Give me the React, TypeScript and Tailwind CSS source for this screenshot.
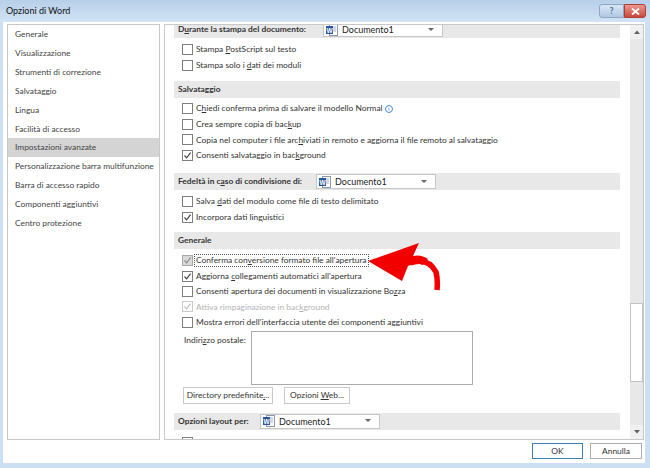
import type { ReactNode } from "react"

const LEFT_ITEMS = [
  "Generale",
  "Visualizzazione",
  "Strumenti di correzione",
  "Salvataggio",
  "Lingua",
  "Facilità di accesso",
  "Impostazioni avanzate",
  "Personalizzazione barra multifunzione",
  "Barra di accesso rapido",
  "Componenti aggiuntivi",
  "Centro protezione",
]

function WordIcon() {
  return (
    <svg width="12" height="12" viewBox="0 0 12 12" className="flex-shrink-0">
      <rect x="3.5" y="0.5" width="8" height="11" fill="#fff" stroke="#8a9bb0" />
      <line x1="7" y1="3" x2="10" y2="3" stroke="#9fb3cc" />
      <line x1="7" y1="5" x2="10" y2="5" stroke="#9fb3cc" />
      <line x1="7" y1="7" x2="10" y2="7" stroke="#9fb3cc" />
      <rect x="0" y="2" width="7" height="8" fill="#2b579a" />
      <text x="3.5" y="8.5" fontSize="6.5" fontWeight="700" fill="#fff" textAnchor="middle" fontFamily="Liberation Sans, sans-serif">
        W
      </text>
    </svg>
  )
}

function Dropdown() {
  return (
    <div className="flex items-center h-[15px] w-[120px] bg-white border border-[#c6c6c6] pl-[2px] pr-[8px] gap-[4px]">
      <WordIcon />
      <span className="flex-1 text-[#222] font-normal leading-none text-[9px]">Documento1</span>
      <svg width="6" height="4" viewBox="0 0 6 4">
        <path d="M0 0 L6 0 L3 3 Z" fill="#666" />
      </svg>
    </div>
  )
}

function Band({ children, labelWidth, dropdown }: { children: ReactNode; labelWidth?: string; dropdown?: boolean }) {
  return (
    <div className="flex items-center h-[17px] bg-[#e8e8e8] pl-[4px] font-bold text-[#333]">
      <span className={`whitespace-nowrap ${labelWidth ?? ""}`}>{children}</span>
      {dropdown && <Dropdown />}
    </div>
  )
}

function Check({ checked, disabled, gray }: { checked?: boolean; disabled?: boolean; gray?: boolean }) {
  const border = disabled ? "border-[#c9c9c9]" : gray ? "border-[#a8a8a8]" : "border-[#7f7f7f]"
  const bg = gray ? "bg-[#d9d9d9]" : "bg-white"
  const stroke = disabled ? "#c0c0c0" : gray ? "#8c8c8c" : "#444"
  return (
    <span className={`flex items-center justify-center w-[11px] h-[11px] border ${border} ${bg} flex-shrink-0`}>
      {checked && (
        <svg width="9" height="9" viewBox="0 0 9 9">
          <path d="M1.5 4.5 L3.6 6.8 L7.6 1.6" fill="none" stroke={stroke} strokeWidth="1.2" />
        </svg>
      )}
    </span>
  )
}

function Row({
  children,
  checked,
  disabled,
  gray,
  focus,
  h = "h-[16px]",
}: {
  children?: ReactNode
  checked?: boolean
  disabled?: boolean
  gray?: boolean
  focus?: boolean
  h?: string
}) {
  return (
    <div className={`flex items-center ${h} pl-[8px] gap-[3px]`}>
      <Check checked={checked} disabled={disabled} gray={gray} />
      {children && (
        <span
          className={`whitespace-nowrap leading-none ${disabled ? "text-[#b4b4b4]" : "text-[#333]"} ${
            focus ? "outline outline-1 outline-dotted outline-[#555] px-[1px] py-[1px] -ml-[1px]" : ""
          }`}
        >
          {children}
        </span>
      )}
    </div>
  )
}

function Btn({ children, w }: { children: ReactNode; w: string }) {
  return (
    <div className={`flex items-center justify-center h-[17px] ${w} bg-white border border-[#c9c9c9] text-[#333]`}>
      <span className="whitespace-nowrap">{children}</span>
    </div>
  )
}

function Arrow() {
  return (
    <svg className="absolute left-0 top-0 pointer-events-none" width="650" height="468" viewBox="0 0 650 468">
      <path d="M368 261 L419 243 L413 256 Q421 254 428 259 L423 265 Q416 262 408 266 L402 281 Z" fill="#f20000" />
      <path d="M410 263 Q428 257 436 272 Q438 280 437 290" fill="none" stroke="#f20000" strokeWidth="5.5" />
    </svg>
  )
}

export default function App() {
  return (
    <div className="relative w-[650px] h-[468px] overflow-hidden bg-[#cddff3] font-[Lato,sans-serif] text-[8.4px]">
      {/* title bar */}
      <div className="flex items-center justify-between h-[22px] bg-gradient-to-b from-[#b7cfea] to-[#d3e3f4] pl-[6px] pr-[4px]">
        <span className="text-[9px] text-[#111]">Opzioni di Word</span>
        <div className="flex self-start mt-[4px]">
          <div className="flex items-center justify-center w-[25px] h-[14px] rounded-l-[3px] border border-[#8ba6c6] bg-gradient-to-b from-[#d9e6f4] to-[#b1c8e3] text-[9px] font-bold text-[#55708f]">
            ?
          </div>
          <div className="flex items-center justify-center w-[22px] h-[14px] rounded-r-[3px] border border-[#b13c32] bg-gradient-to-b from-[#e99890] to-[#c8483c]">
            <svg width="9" height="7" viewBox="0 0 9 7">
              <path d="M1 0.5 L8 6.5 M8 0.5 L1 6.5" stroke="#fff" strokeWidth="1.8" />
            </svg>
          </div>
        </div>
      </div>

      {/* body */}
      <div className="flex flex-col ml-[3px] mr-[5px] h-[441px] bg-white pl-[4px] pt-[2px] pr-[1px]">
        <div className="flex h-[416px] gap-[4px]">
          {/* left nav */}
          <div className="w-[153px] border border-[#c8c8c8] bg-white">
            {LEFT_ITEMS.map((item, i) => (
              <div
                key={item}
                className={`flex items-center h-[18.9px] pl-[7px] whitespace-nowrap text-[#444] ${
                  i === 6 ? "bg-[#d4d4d4] text-[#222]" : ""
                }`}
              >
                {item}
              </div>
            ))}
          </div>

          {/* right content */}
          <div className="flex flex-1 border border-[#c8c8c8] overflow-hidden">
            <div className="flex-1 pl-[9px] pr-[10px] overflow-hidden">
              <div className="-mt-[4px]">
                <Band labelWidth="w-[145px]" dropdown>
                  D<u>u</u>rante la stampa del documento:
                </Band>
                <div className="mt-[3px]">
                  <Row>
                    Stampa <u>P</u>ostScript sul testo
                  </Row>
                  <Row>
                    Stampa solo i <u>d</u>ati dei moduli
                  </Row>
                </div>

                <div className="mt-[8px]">
                  <Band>Salvataggio</Band>
                </div>
                <div className="mt-[3px]">
                  <Row h="h-[15.5px]">
                    C<u>h</u>iedi conferma prima di salvare il modello Normal{" "}
                    <span className="inline-flex items-center justify-center w-[8px] h-[8px] rounded-full border border-[#4a90d9] text-[6px] text-[#4a90d9] align-middle">
                      i
                    </span>
                  </Row>
                  <Row h="h-[15.5px]">
                    Crea sempre copia di bac<u>k</u>up
                  </Row>
                  <Row h="h-[15.5px]">
                    Copia nel computer i file arc<u>h</u>iviati in remoto e aggiorna il file remoto al salvataggio
                  </Row>
                  <Row h="h-[15.5px]" checked>
                    Consenti salvataggio in bac<u>k</u>ground
                  </Row>
                </div>

                <div className="mt-[10px]">
                  <Band labelWidth="w-[138px]" dropdown>
                    Fedeltà in c<u>a</u>so di condivisione di:
                  </Band>
                </div>
                <div className="mt-[3px]">
                  <Row>
                    Salva <u>d</u>ati del modulo come file di testo delimitato
                  </Row>
                  <Row checked>
                    Incorpora dati lin<u>g</u>uistici
                  </Row>
                </div>

                <div className="mt-[7px]">
                  <Band>Generale</Band>
                </div>
                <div className="mt-[4px]">
                  <Row h="h-[15.4px]" checked gray focus>
                    Conferma con<u>v</u>ersione formato file all'apertura
                  </Row>
                  <Row h="h-[15.4px]" checked>
                    Aggiorna <u>c</u>ollegamenti automatici all'apertura
                  </Row>
                  <Row h="h-[15.4px]">
                    Consenti apertura dei documenti in visualizzazione Bo<u>z</u>za
                  </Row>
                  <Row h="h-[15.4px]" checked disabled>
                    Attiva rimpaginazione in bac<u>k</u>ground
                  </Row>
                  <Row h="h-[15.4px]">Mostra errori dell'interfaccia utente dei componenti aggiuntivi</Row>
                </div>

                <div className="flex mt-[1px] pl-[10px]">
                  <span className="w-[67px] pt-[3px] whitespace-nowrap text-[#333]">
                    Indiri<u>z</u>zo postale:
                  </span>
                  <div className="w-[222px] h-[54px] border border-[#ababab] bg-white" />
                </div>

                <div className="flex gap-[11px] mt-[2px] pl-[9px]">
                  <Btn w="w-[90px]">
                    Directory predefinite<u>.</u>..
                  </Btn>
                  <Btn w="w-[66px]">
                    Opzioni <u>W</u>eb...
                  </Btn>
                </div>

                <div className="mt-[9px]">
                  <Band labelWidth="w-[82px]" dropdown>
                    Opzioni layout per:
                  </Band>
                </div>
                <div className="mt-[5px]">
                  <Row />
                </div>
              </div>
            </div>

            {/* scrollbar */}
            <div className="flex flex-col w-[13px] bg-[#e8e8e8]">
              <div className="flex items-center justify-center h-[14px] bg-[#f0f0f0]">
                <svg width="6" height="4" viewBox="0 0 6 4">
                  <path d="M0 4 L6 4 L3 0.5 Z" fill="#606060" />
                </svg>
              </div>
              <div className="h-[264px]" />
              <div className="h-[79px] bg-white border border-[#c2c2c2]" />
              <div className="flex-1" />
              <div className="flex items-center justify-center h-[14px] bg-[#f0f0f0]">
                <svg width="6" height="4" viewBox="0 0 6 4">
                  <path d="M0 0 L6 0 L3 3.5 Z" fill="#606060" />
                </svg>
              </div>
            </div>
          </div>
        </div>

        {/* footer */}
        <div className="flex justify-end gap-[7px] mt-[3px] pr-[2px]">
          <div className="flex items-center justify-center w-[51px] h-[16px] bg-white border border-[#3c7fb1] text-[#333]">
            OK
          </div>
          <div className="flex items-center justify-center w-[52px] h-[16px] bg-white border border-[#acacac] text-[#333]">
            Annulla
          </div>
        </div>
      </div>

      <Arrow />
    </div>
  )
}
